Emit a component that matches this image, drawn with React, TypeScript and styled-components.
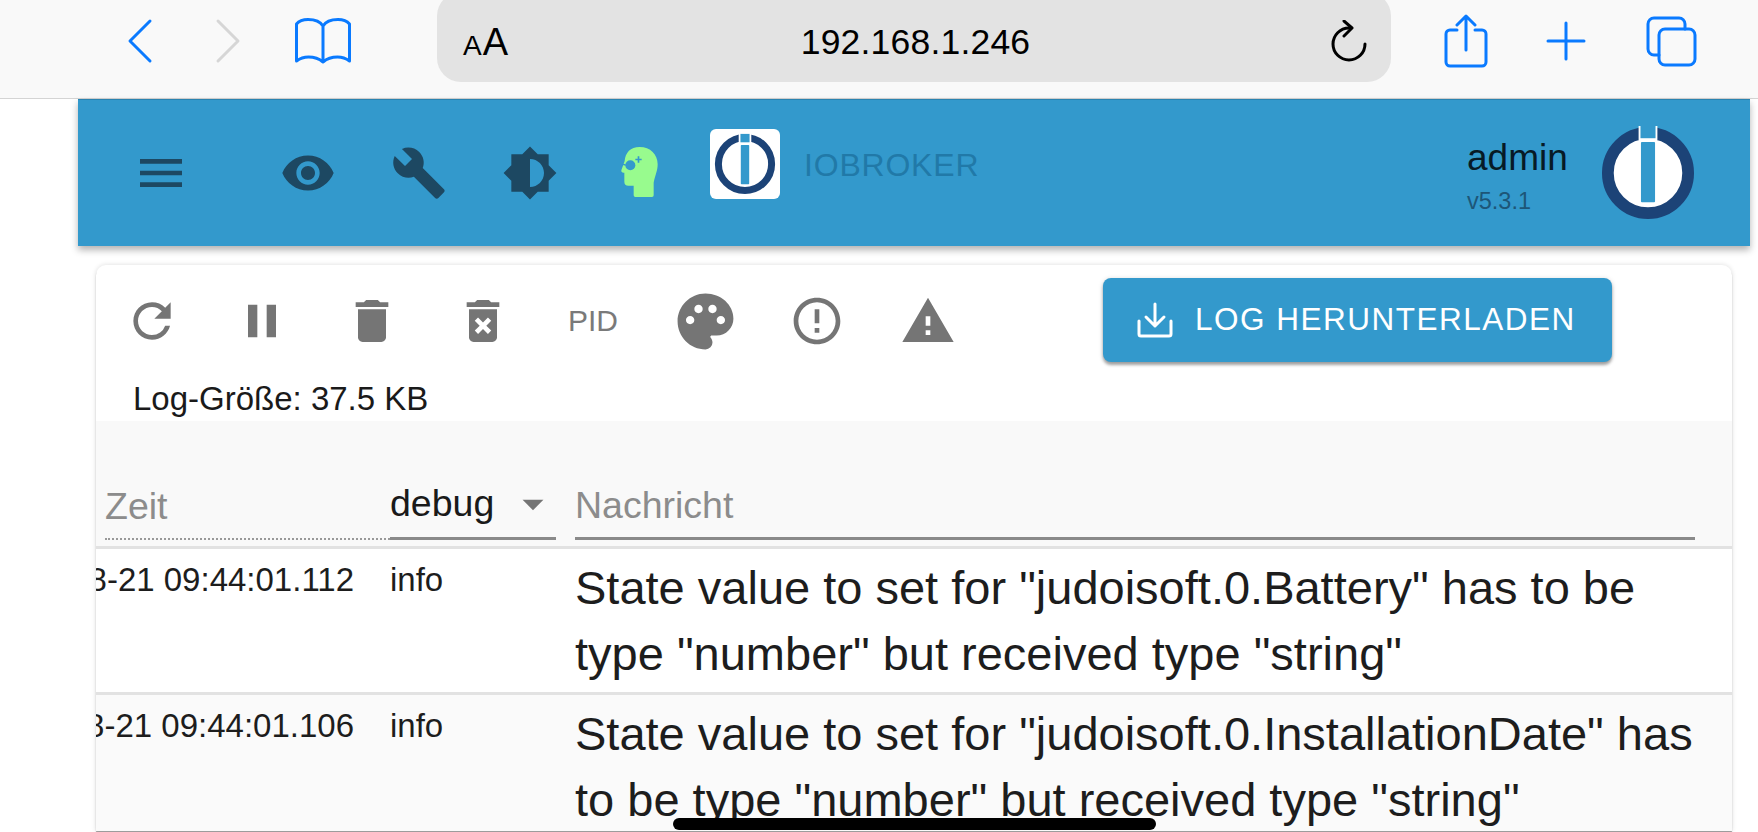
import React from "react";
import styled, { createGlobalStyle } from "styled-components";
import { MdMenu, MdVisibility, MdBuild, MdRefresh, MdPause, MdDelete, MdDeleteForever, MdErrorOutline, MdWarning, MdArrowDropDown, MdPalette } from "react-icons/md";

const Global = createGlobalStyle`
  html, body { margin: 0; padding: 0; background: #fff; }
  body { font-family: "Liberation Sans", Arial, sans-serif; overflow: hidden; }
`;

const Page = styled.div`
  position: relative;
  width: 1758px;
  height: 832px;
  overflow: hidden;
  background: #fff;
`;

const SafariBar = styled.header`
  height: 99px;
  box-sizing: border-box;
  background: #f9f9f9;
  border-bottom: 1px solid #d4d4d4;
  display: flex;
  align-items: flex-start;
`;

const NavIcons = styled.div`
  width: 437px;
  flex: none;
  height: 82px;
  display: flex;
  align-items: center;
  padding-left: 127px;
  box-sizing: border-box;
`;

const SafariIcon = styled.svg<{ $w: number; $h: number; $ml?: number }>`
  flex: none;
  width: ${(p) => p.$w}px;
  height: ${(p) => p.$h}px;
  margin-left: ${(p) => p.$ml ?? 0}px;
  fill: none;
  stroke-width: 3;
  stroke-linecap: round;
  stroke-linejoin: round;
  display: block;
`;

const UrlBox = styled.div`
  width: 954px;
  height: 90px;
  margin-top: -8px;
  flex: none;
  box-sizing: border-box;
  background: #e3e3e3;
  border-radius: 24px;
  display: grid;
  grid-template-columns: 1fr auto 1fr;
  align-items: center;
  padding: 8px 23px 0 26px;
  color: #000;
`;

const AaLabel = styled.div`
  font-size: 38px;
  line-height: 1;
  letter-spacing: 1px;
  display: flex;
  align-items: baseline;
  padding-top: 2px;
  small { font-size: 28px; }
`;

const UrlText = styled.div`
  font-size: 35.5px;
  line-height: 1;
  letter-spacing: 0.2px;
  padding-top: 3px;
`;

const ReloadWrap = styled.div`
  display: flex;
  justify-content: flex-end;
  padding-top: 2px;
`;

const SafariRight = styled.div`
  display: flex;
  align-items: center;
  height: 82px;
  padding-left: 53px;
`;

const AppBar = styled.div`
  margin-left: 78px;
  width: 1672px;
  height: 147px;
  background: #3399cc;
  border-top: 1px solid #2a83b0;
  box-sizing: border-box;
  box-shadow: 0 4px 7px rgba(0, 0, 0, 0.3);
  display: flex;
  align-items: center;
  color: #1f4a66;
`;

const BarIcon = styled.div<{ $ml: number; $color?: string }>`
  margin-left: ${(p) => p.$ml}px;
  width: 56px;
  height: 56px;
  flex: none;
  color: ${(p) => p.$color ?? "#1d4862"};
  svg { width: 100%; height: 100%; display: block; }
`;

const LogoTile = styled.div`
  margin-left: 41px;
  margin-top: -18px;
  width: 70px;
  height: 70px;
  border-radius: 6px;
  background: #fff;
  flex: none;
`;

const Brand = styled.div`
  margin-left: 24px;
  margin-top: -16px;
  font-size: 32px;
  letter-spacing: 0.8px;
  color: #2179a8;
`;

const UserBox = styled.div`
  margin-left: auto;
  display: flex;
  align-items: center;
  padding-right: 55px;
`;

const UserText = styled.div`
  width: 134px;
  margin-top: 4px;
`;

const UserName = styled.div`
  font-size: 37px;
  line-height: 42px;
  color: #071a26;
`;

const UserVersion = styled.div`
  font-size: 23.5px;
  line-height: 26px;
  margin-top: 9px;
  color: #1d5678;
`;

const Card = styled.main`
  margin: 19px 0 0 96px;
  width: 1636px;
  height: 566px;
  border-radius: 10px 10px 0 0;
  overflow: hidden;
  background: #fff;
  box-shadow: 0 0 5px rgba(0, 0, 0, 0.14), 0 2px 1px rgba(0, 0, 0, 0.35);
`;

const Toolbar = styled.section`
  height: 156px;
  box-sizing: border-box;
  padding-left: 38px;
  display: flex;
  flex-direction: column;
`;

const ToolRow = styled.div`
  height: 112px;
  flex: none;
  display: flex;
  align-items: center;
  color: #757575;
`;

const ToolIcon = styled.div<{ $w: number; $ml: number; $size?: number }>`
  width: ${(p) => p.$w}px;
  margin-left: ${(p) => p.$ml}px;
  flex: none;
  display: flex;
  justify-content: center;
  svg { width: ${(p) => p.$size ?? 56}px; height: ${(p) => p.$size ?? 56}px; flex: none; display: block; }
`;

const PidLabel = styled.div`
  margin-left: 57px;
  width: 50px;
  font-size: 30px;
  line-height: 1;
  color: #7a7a7a;
`;

const DownloadButton = styled.button`
  margin-left: 147px;
  width: 509px;
  height: 84px;
  margin-top: -3px;
  flex: none;
  border: 0;
  border-radius: 8px;
  background: #3399cc;
  color: #fff;
  font: 400 31.5px "Liberation Sans", Arial, sans-serif;
  letter-spacing: 1.5px;
  display: flex;
  align-items: center;
  gap: 22px;
  padding: 0 0 0 34px;
  box-shadow: 0 3px 3px rgba(0, 0, 0, 0.3), 0 1px 5px rgba(0, 0, 0, 0.18);
`;

const SizeText = styled.div`
  font-size: 33px;
  line-height: 38px;
  margin: 3px 0 0 -1px;
  color: #1a1a1a;
`;

const Grid = styled.section`
  display: grid;
  grid-template-columns: 294px 185px 1120px;
`;

const FilterRow = styled(Grid)`
  height: 125px;
  background: #f9f9f9;
  border-bottom: 3px solid #e2e2e2;
`;

const FilterCell = styled.div<{ $dotted?: boolean; $pad: number; $right?: number }>`
  margin-left: ${(p) => p.$pad}px;
  margin-right: ${(p) => p.$right ?? 0}px;
  height: 119px;
  box-sizing: border-box;
  border-bottom: ${(p) => (p.$dotted ? "2px dotted #999" : "3px solid #8a8a8a")};
  display: flex;
  align-items: flex-end;
  justify-content: space-between;
  padding-bottom: 11px;
  font-size: 37.5px;
  line-height: 42px;
  color: #8c8c8c;
`;

const LevelSelect = styled.span`
  color: #1a1a1a;
  margin-bottom: 2px;
`;

const LogRow = styled(Grid)<{ $alt?: boolean }>`
  background: ${(p) => (p.$alt ? "#fafafa" : "#fff")};
  border-bottom: 3px solid #e2e2e2;
  height: 143px;
`;

const TimeCell = styled.div`
  font-size: 33px;
  line-height: 38px;
  padding: 12px 36px 0 0;
  color: #1d1d1d;
  display: flex;
  justify-content: flex-end;
  white-space: nowrap;
  overflow: hidden;
`;

const LevelCell = styled.div`
  font-size: 33px;
  line-height: 38px;
  padding: 12px 0 0 0;
  color: #1d1d1d;
`;

const MessageCell = styled.div`
  font-size: 47px;
  line-height: 66px;
  padding: 6px 0 0 0;
  color: #1d1d1d;
`;

const HomeIndicator = styled.div`
  position: absolute;
  left: 673px;
  top: 818px;
  width: 483px;
  height: 12px;
  border-radius: 6px;
  background: #000;
`;

const TileLogo = () => (
  <svg width="70" height="70" viewBox="0 0 100 100" style={{ display: "block" }}>
    <circle cx="50" cy="50" r="38" fill="#fff" stroke="#1c4377" strokeWidth="10" />
    <rect x="41" y="5" width="18" height="16" fill="#fff" />
    <rect x="43.500" y="7" width="13" height="12" fill="#3399cc" />
    <rect x="44" y="23" width="12" height="56" rx="1" fill="#3399cc" />
  </svg>
);

const RoundLogo = () => (
  <svg width="94" height="94" viewBox="0 0 100 100" style={{ display: "block" }}>
    <circle cx="50" cy="50" r="42.700" fill="#fff" stroke="#1c4377" strokeWidth="12.500" />
    <rect x="40" y="0" width="20" height="15" fill="#fff" />
    <rect x="42" y="0" width="16" height="13" fill="#3399cc" />
    <rect x="42.500" y="17" width="15" height="64" rx="1" fill="#3399cc" />
  </svg>
);

const rows = [
  { time: "2021-08-21 09:44:01.112", msg: 'State value to set for "judoisoft.0.Battery" has to be type "number" but received type "string"' },
  { time: "2021-08-21 09:44:01.106", msg: 'State value to set for "judoisoft.0.InstallationDate" has to be type "number" but received type "string"' },
];

export default function App() {
  return (
    <Page>
      <Global />
      <SafariBar>
        <NavIcons>
          <SafariIcon $w={26} $h={46} viewBox="0 0 26 46" stroke="#0a7aff"><path d="M23 3 3 23l20 20" /></SafariIcon>
          <SafariIcon $w={26} $h={46} $ml={62} viewBox="0 0 26 46" stroke="#d6d6d6"><path d="m3 3 20 20L3 43" /></SafariIcon>
          <SafariIcon $w={58} $h={48} $ml={53} viewBox="0 0 58 48" stroke="#0a7aff">
            <path d="M29 9C26 4 20 2.500 14 2.500 9 2.500 5 4 2.500 7v37c4-3 8-4 12-4 6 0 11 2 14.500 5 3.500-3 8.500-5 14.500-5 4 0 8 1 12 4V7C53 4 49 2.500 44 2.500 38 2.500 32 4 29 9Zm0 0v36" />
          </SafariIcon>
        </NavIcons>
        <UrlBox>
          <AaLabel><small>A</small>A</AaLabel>
          <UrlText>192.168.1.246</UrlText>
          <ReloadWrap>
            <SafariIcon $w={38} $h={44} viewBox="0 0 38 44" stroke="#000">
              <path d="M19 8A16 16 0 1 0 35 24" /><path d="m14 1 8 7-8 8" />
            </SafariIcon>
          </ReloadWrap>
        </UrlBox>
        <SafariRight>
          <SafariIcon $w={44} $h={54} viewBox="0 0 44 54" stroke="#0a7aff">
            <path d="M13 16H6a4 4 0 0 0-4 4v28a4 4 0 0 0 4 4h32a4 4 0 0 0 4-4V20a4 4 0 0 0-4-4h-7M22 36V3M13 11l9-9 9 9" />
          </SafariIcon>
          <SafariIcon $w={40} $h={40} $ml={58} viewBox="0 0 40 40" stroke="#0a7aff"><path d="M20 2v36M2 20h36" /></SafariIcon>
          <SafariIcon $w={51} $h={51} $ml={60} viewBox="0 0 51 51" stroke="#0a7aff">
            <path d="M39 13V8a6 6 0 0 0-6-6H8a6 6 0 0 0-6 6v25a6 6 0 0 0 6 6h5" />
            <rect x="13" y="13" width="36" height="36" rx="6" />
          </SafariIcon>
        </SafariRight>
      </SafariBar>

      <AppBar>
        <BarIcon $ml={55}><MdMenu /></BarIcon>
        <BarIcon $ml={91}><MdVisibility /></BarIcon>
        <BarIcon $ml={55}><MdBuild /></BarIcon>
        <BarIcon $ml={55}>
          <svg viewBox="0 0 24 24" fill="currentColor"><path d="M20 15.31 23.310 12 20 8.690V4h-4.690L12 .69 8.690 4H4v4.690L.69 12 4 15.310V20h4.690L12 23.310 15.310 20H20v-4.690zM12 18V6c3.310 0 6 2.690 6 6s-2.690 6-6 6z" /></svg>
        </BarIcon>
        <BarIcon $ml={55} $color="#98fb8e">
          <svg viewBox="8 62 168 168" fill="currentColor">
            <path d="M88 68C60 68 45 85 43 110L33 138Q32 145 40 145H42V172Q42 184 54 184H70V213Q70 218 75 218H125Q130 218 130 213V175C135 150 142 140 142 120 142 90 120 68 88 68Z" />
            <circle cx="60" cy="123" r="15" fill="#3399cc" />
            <path d="M46 122 38 120" stroke="#3399cc" strokeWidth="4" />
            <path d="M82 96h5v7h7v5h-7v7h-5v-7h-7v-5h7z" fill="#3399cc" />
          </svg>
        </BarIcon>
        <LogoTile><TileLogo /></LogoTile>
        <Brand>IOBROKER</Brand>
        <UserBox>
          <UserText>
            <UserName>admin</UserName>
            <UserVersion>v5.3.1</UserVersion>
          </UserText>
          <RoundLogo />
        </UserBox>
      </AppBar>

      <Card>
        <Toolbar>
          <ToolRow>
            <ToolIcon $w={56} $ml={-10}><MdRefresh /></ToolIcon>
            <ToolIcon $w={56} $ml={54}><MdPause /></ToolIcon>
            <ToolIcon $w={56} $ml={54}><MdDelete /></ToolIcon>
            <ToolIcon $w={56} $ml={55}><MdDeleteForever /></ToolIcon>
            <PidLabel>PID</PidLabel>
            <ToolIcon $w={56} $ml={59} $size={67}><MdPalette /></ToolIcon>
            <ToolIcon $w={56} $ml={56}><MdErrorOutline /></ToolIcon>
            <ToolIcon $w={56} $ml={55}><MdWarning /></ToolIcon>
            <DownloadButton>
              <svg width="36" height="36" viewBox="0 0 36 36" fill="none" stroke="#fff" strokeWidth="3" strokeLinecap="round" strokeLinejoin="round">
                <path d="M2 19v13a2 2 0 0 0 2 2h28a2 2 0 0 0 2-2V19M18 2v22M9 15l9 9 9-9" />
              </svg>
              LOG HERUNTERLADEN
            </DownloadButton>
          </ToolRow>
          <SizeText>Log-Größe: 37.5 KB</SizeText>
        </Toolbar>
        <FilterRow>
          <FilterCell $dotted $pad={9}>Zeit</FilterCell>
          <FilterCell $pad={0} $right={19}>
            <LevelSelect>debug</LevelSelect>
            <MdArrowDropDown size={50} style={{ color: "#757575", marginRight: -2, marginBottom: -3 }} />
          </FilterCell>
          <FilterCell $pad={0}>Nachricht</FilterCell>
        </FilterRow>
        {rows.map((r, i) => (
          <LogRow key={r.time} $alt={i === 1}>
            <TimeCell>{r.time}</TimeCell>
            <LevelCell>info</LevelCell>
            <MessageCell>{r.msg}</MessageCell>
          </LogRow>
        ))}
      </Card>
      <HomeIndicator />
    </Page>
  );
}
